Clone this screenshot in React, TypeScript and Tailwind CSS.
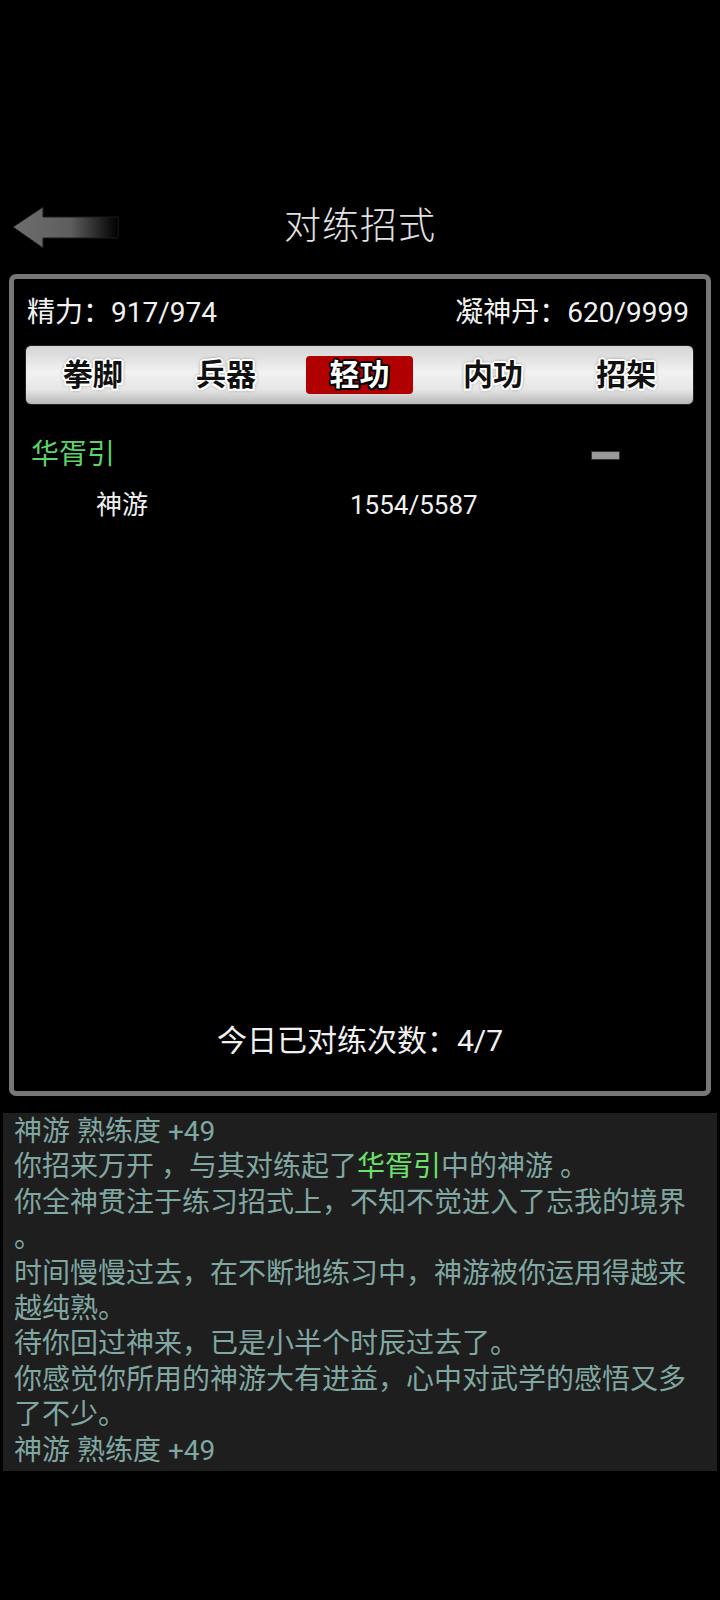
import React from 'react';

const tabs = ['拳脚', '兵器', '轻功', '内功', '招架'];
const activeTab = '轻功';

const logLines: { text: string; green?: string; tail?: string }[] = [
  { text: '神游 熟练度 +49' },
  { text: '你招来万开 ，与其对练起了', green: '华胥引', tail: '中的神游 。' },
  { text: '你全神贯注于练习招式上，不知不觉进入了忘我的境界。' },
  { text: '时间慢慢过去，在不断地练习中，神游被你运用得越来越纯熟。' },
  { text: '待你回过神来，已是小半个时辰过去了。' },
  { text: '你感觉你所用的神游大有进益，心中对武学的感悟又多了不少。' },
  { text: '神游 熟练度 +49' },
];

function BackArrow() {
  return (
    <svg width="130" height="50" viewBox="0 0 130 50">
      <defs>
        <linearGradient id="arrowFade" x1="0" y1="0" x2="1" y2="0">
          <stop offset="0" stopColor="#6e6e6e" />
          <stop offset="0.55" stopColor="#5e5e5e" />
          <stop offset="1" stopColor="#000000" />
        </linearGradient>
      </defs>
      <polygon
        points="13,25 43,5 43,15 118,15 118,36 43,36 43,46"
        fill="url(#arrowFade)"
        stroke="#1a1a1a"
        strokeWidth="1"
      />
    </svg>
  );
}

function Tab({ label }: { label: string }) {
  const active = label === activeTab;
  return (
    <div className="flex items-center justify-center">
      {active ? (
        <div className="flex h-[38px] w-[107px] items-center justify-center rounded-[4px] bg-[#b00000]">
          <span className="text-[30px] font-bold leading-none text-white [text-shadow:2px_0_0_#000,-2px_0_0_#000,0_2px_0_#000,0_-2px_0_#000,1.5px_1.5px_0_#000,-1.5px_-1.5px_0_#000,1.5px_-1.5px_0_#000,-1.5px_1.5px_0_#000]">
            {label}
          </span>
        </div>
      ) : (
        <span className="text-[30px] font-bold leading-none text-[#111] [text-shadow:2px_0_0_#fff,-2px_0_0_#fff,0_2px_0_#fff,0_-2px_0_#fff,1.5px_1.5px_0_#fff,-1.5px_-1.5px_0_#fff,1.5px_-1.5px_0_#fff,-1.5px_1.5px_0_#fff,0_0_4px_#000]">
          {label}
        </span>
      )}
    </div>
  );
}

export default function App() {
  return (
    <div className="h-[1600px] w-[720px] overflow-hidden bg-black font-['Roboto','Noto_Sans_CJK_SC',sans-serif] text-white">
      {/* header */}
      <div className="mt-[197px] grid h-[60px] grid-cols-[130px_1fr_130px] items-center">
        <BackArrow />
        <div className="text-center text-[37px] font-light tracking-[1px] text-[#e2e2e2]">对练招式</div>
        <div />
      </div>

      {/* main panel */}
      <div className="mx-[9px] mt-[17px] flex h-[822px] flex-col rounded-[7px] border-[5px] border-[#777]">
        <div className="mt-[16px] flex h-[36px] items-center justify-between pl-[13px] pr-[17px] text-[28px] text-[#f2f2f2]">
          <span>精力：917/974</span>
          <span>凝神丹：620/9999</span>
        </div>

        <div className="ml-[11px] mr-[12px] mt-[14px] grid h-[60px] grid-cols-5 rounded-[6px] border border-[#222] bg-[linear-gradient(to_bottom,#d4d4d4,#f2f2f2_45%,#e6e6e6_75%,#b8b8b8)]">
          {tabs.map((t) => (
            <Tab key={t} label={t} />
          ))}
        </div>

        <div className="mt-[30px] flex h-[40px] items-center justify-between pl-[17px] pr-[86px]">
          <span className="text-[28px] text-[#5cd46a]">华胥引</span>
          <div className="h-[9px] w-[29px] border border-[#333] bg-[#999]" />
        </div>

        <div className="mt-[12px] flex h-[36px] items-center pl-[82px] text-[26px] text-[#f0f0f0]">
          <span className="w-[254px]">神游</span>
          <span>1554/5587</span>
        </div>

        <div className="flex-1" />

        <div className="mb-[31px] flex h-[40px] items-center justify-center text-[30px] text-[#f0f0f0]">
          今日已对练次数：4/7
        </div>
      </div>

      {/* message log */}
      <div className="mx-[3px] mt-[17px] bg-[#1e1e1e] pb-[3px] pl-[11px] pr-[11px] pt-[1px] text-[28px] leading-[35.4px] text-[#80a7a1] [line-break:anywhere]">
        {logLines.map((l, i) => (
          <p key={i}>
            {l.text}
            {l.green && <span className="text-[#6be36b]">{l.green}</span>}
            {l.tail}
          </p>
        ))}
      </div>
    </div>
  );
}
